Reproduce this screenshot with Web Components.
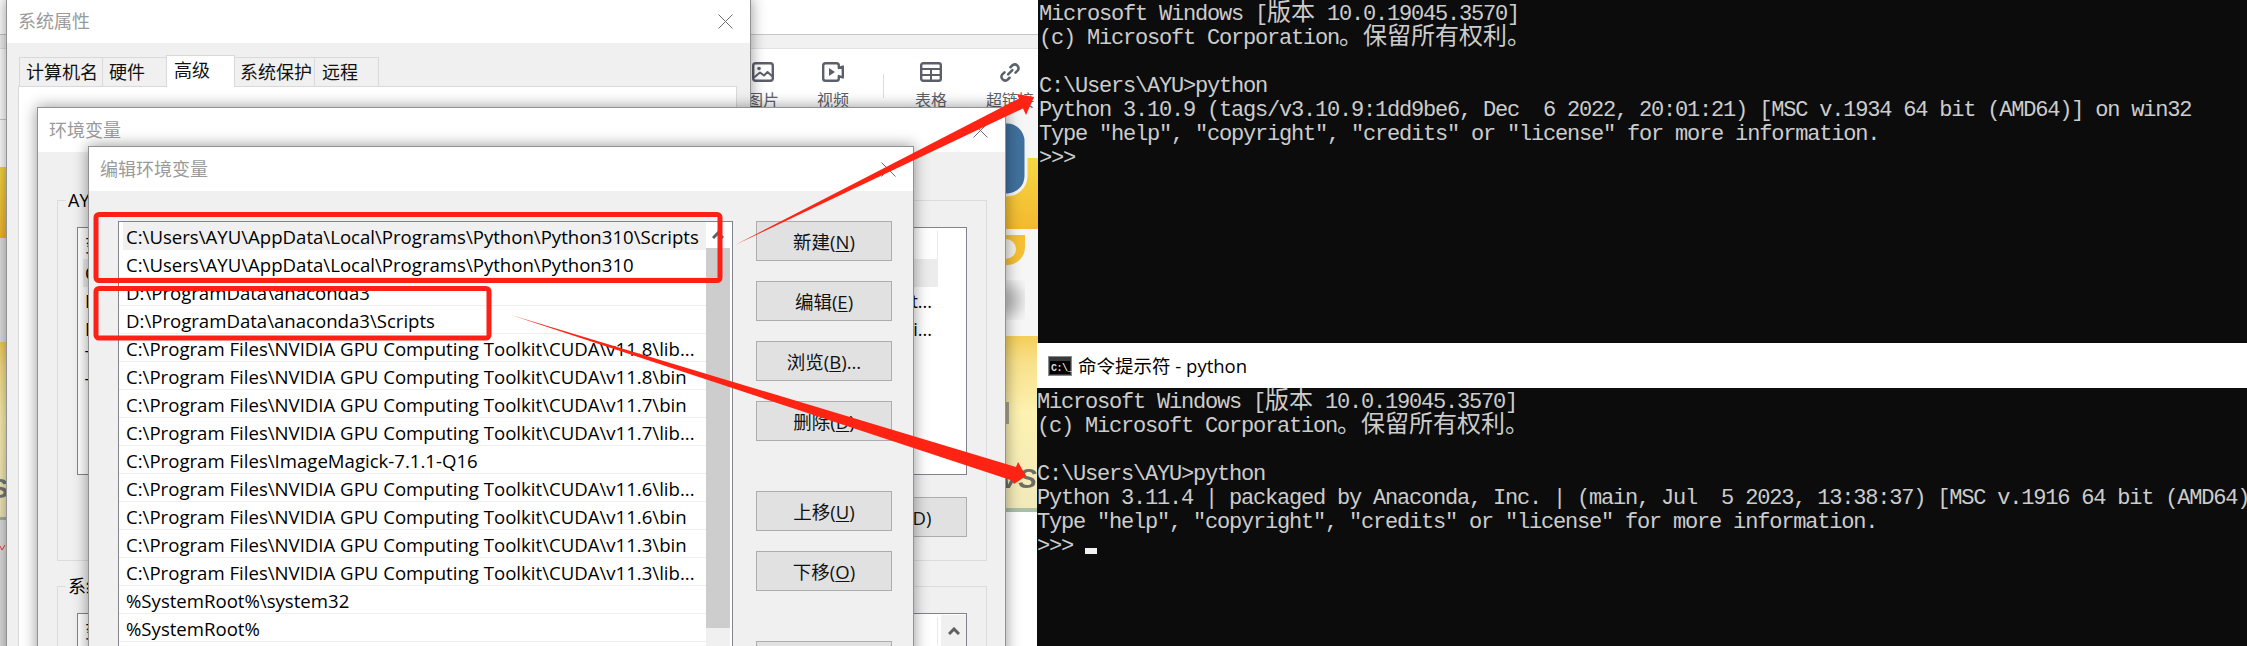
<!DOCTYPE html>
<html lang="zh-CN">
<head>
<meta charset="utf-8">
<title>Python PATH</title>
<style>
html,body{margin:0;padding:0;background:#fff;overflow:hidden}
body{font-family:"Open Sans","Noto Sans CJK SC",sans-serif}
x-desktop{width:2247px;height:646px}
#back{left:0;top:0;width:1038px;height:646px}
#sys{left:6px;top:-2px;width:745px;height:660px}
#env{left:37px;top:107px;width:969px;height:560px}
#edit{left:88px;top:146px;width:826px;height:520px}
#t1{left:1038px;top:0;width:1209px;height:343px}
#t2{left:1037px;top:343px;width:1210px;height:303px}
u{text-underline-offset:2px}
</style>
</head>
<body>
<x-desktop>
  <x-wallpaper></x-wallpaper>
  <x-backapp id="back">
    <x-tool label="图片"><svg viewBox="0 0 22 20" width="22" height="20" fill="none" stroke="#5b5f6b" stroke-width="2.4" stroke-linejoin="round"><rect x="1.2" y="1.2" width="19.6" height="17.6" rx="2.5"/><circle cx="7" cy="6.5" r="1.8" fill="#5b5f6b" stroke="none"/><path d="M2 15.5 8 10.5 12 13.5 15.5 10 20.5 14.5" stroke-width="2"/></svg></x-tool>
    <x-tool label="视频"><svg viewBox="0 0 22 20" width="22" height="20" fill="none" stroke="#5b5f6b" stroke-width="2.4" stroke-linejoin="round"><path d="M3.5 1.2H14.5A2.3 2.3 0 0 1 16.8 3.5V6L20.8 4.5V15.5L16.8 14V16.5A2.3 2.3 0 0 1 14.5 18.8H3.5A2.3 2.3 0 0 1 1.2 16.5V3.5A2.3 2.3 0 0 1 3.5 1.2Z"/><path d="M7 6V14L13 10Z" fill="#5b5f6b" stroke="none"/></svg></x-tool>
    <x-sep></x-sep>
    <x-tool label="表格" style="margin-left:12px"><svg viewBox="0 0 22 20" width="22" height="20" fill="none" stroke="#5b5f6b" stroke-width="2.4" stroke-linejoin="round"><rect x="1.2" y="1.2" width="19.6" height="17.6" rx="2"/><path d="M1.2 7H20.8M1.2 13H20.8M11 7V18.8" stroke-width="2"/></svg></x-tool>
    <x-tool label="超链接" style="width:88px"><svg viewBox="0 0 22 22" width="22" height="21" fill="none" stroke="#5b5f6b" stroke-width="2.6" stroke-linecap="round"><path d="M9 13 13.5 8.5"/><path d="M11.5 5.5 13.8 3.2A4 4 0 0 1 19.3 8.7L16.8 11.2"/><path d="M10.5 16.5 8.2 18.8A4 4 0 0 1 2.7 13.3L5.2 10.8"/></svg></x-tool>
  </x-backapp>

  <x-window id="sys" caption="系统属性">
    <x-tabstrip>
      <x-tab style="width:83.5px;padding-left:6px">计算机名</x-tab>
      <x-tab style="width:65px;padding-left:6.5px">硬件</x-tab>
      <x-tab active style="width:69px;padding-left:7.5px">高级</x-tab>
      <x-tab style="width:81.5px;padding-left:5.5px">系统保护</x-tab>
      <x-tab style="width:64.5px;padding-left:7px">远程</x-tab>
    </x-tabstrip>
    <x-tabpage></x-tabpage>
  </x-window>

  <x-window id="env" caption="环境变量">
    <x-envbody>
      <x-group legend="AYU 的用户变量(U)" style="height:361px">
        <x-varlist style="height:248px">
          <x-varrow head>变量</x-varrow>
          <x-varrow hot>OneDrive</x-varrow>
          <x-varrow tail="t...">Path</x-varrow>
          <x-varrow tail="pi...">PyCharm</x-varrow>
          <x-varrow>TEMP</x-varrow>
          <x-varrow>TMP</x-varrow>
        </x-varlist>
        <x-btnrow><x-winbtn style="width:200px;padding-left:102px;text-align:left">删除(D)</x-winbtn></x-btnrow>
      </x-group>
      <x-group legend="系统变量(S)" style="height:90px;margin-top:25px">
        <x-varlist arrow style="height:60px">
          <x-varrow head>变量</x-varrow>
        </x-varlist>
      </x-group>
    </x-envbody>
  </x-window>

  <x-window id="edit" caption="编辑环境变量">
    <x-editbody>
      <x-pathlist>
        <x-pathrow hot>C:\Users\AYU\AppData\Local\Programs\Python\Python310\Scripts</x-pathrow>
        <x-pathrow>C:\Users\AYU\AppData\Local\Programs\Python\Python310</x-pathrow>
        <x-pathrow>D:\ProgramData\anaconda3</x-pathrow>
        <x-pathrow>D:\ProgramData\anaconda3\Scripts</x-pathrow>
        <x-pathrow>C:\Program Files\NVIDIA GPU Computing Toolkit\CUDA\v11.8\lib...</x-pathrow>
        <x-pathrow>C:\Program Files\NVIDIA GPU Computing Toolkit\CUDA\v11.8\bin</x-pathrow>
        <x-pathrow>C:\Program Files\NVIDIA GPU Computing Toolkit\CUDA\v11.7\bin</x-pathrow>
        <x-pathrow>C:\Program Files\NVIDIA GPU Computing Toolkit\CUDA\v11.7\lib...</x-pathrow>
        <x-pathrow>C:\Program Files\ImageMagick-7.1.1-Q16</x-pathrow>
        <x-pathrow>C:\Program Files\NVIDIA GPU Computing Toolkit\CUDA\v11.6\lib...</x-pathrow>
        <x-pathrow>C:\Program Files\NVIDIA GPU Computing Toolkit\CUDA\v11.6\bin</x-pathrow>
        <x-pathrow>C:\Program Files\NVIDIA GPU Computing Toolkit\CUDA\v11.3\bin</x-pathrow>
        <x-pathrow>C:\Program Files\NVIDIA GPU Computing Toolkit\CUDA\v11.3\lib...</x-pathrow>
        <x-pathrow>%SystemRoot%\system32</x-pathrow>
        <x-pathrow>%SystemRoot%</x-pathrow>
      </x-pathlist>
      <x-btncol>
        <x-winbtn>新建(<u>N</u>)</x-winbtn>
        <x-winbtn>编辑(<u>E</u>)</x-winbtn>
        <x-winbtn>浏览(<u>B</u>)...</x-winbtn>
        <x-winbtn>删除(<u>D</u>)</x-winbtn>
        <x-winbtn style="margin-top:30px">上移(<u>U</u>)</x-winbtn>
        <x-winbtn>下移(<u>O</u>)</x-winbtn>
        <x-winbtn style="margin-top:30px"></x-winbtn>
      </x-btncol>
    </x-editbody>
  </x-window>

  <x-terminal id="t1">
    <x-line>Microsoft Windows [<x-wide>版本</x-wide> 10.0.19045.3570]</x-line>
    <x-line>(c) Microsoft Corporation<x-wide>。保留所有权利。</x-wide></x-line>
    <x-line></x-line>
    <x-line>C:\Users\AYU&gt;python</x-line>
    <x-line>Python 3.10.9 (tags/v3.10.9:1dd9be6, Dec  6 2022, 20:01:21) [MSC v.1934 64 bit (AMD64)] on win32</x-line>
    <x-line>Type "help", "copyright", "credits" or "license" for more information.</x-line>
    <x-line>&gt;&gt;&gt;</x-line>
  </x-terminal>

  <x-terminal id="t2" caption="命令提示符 - python">
    <x-line>Microsoft Windows [<x-wide>版本</x-wide> 10.0.19045.3570]</x-line>
    <x-line>(c) Microsoft Corporation<x-wide>。保留所有权利。</x-wide></x-line>
    <x-line></x-line>
    <x-line>C:\Users\AYU&gt;python</x-line>
    <x-line>Python 3.11.4 | packaged by Anaconda, Inc. | (main, Jul  5 2023, 13:38:37) [MSC v.1916 64 bit (AMD64)</x-line>
    <x-line>Type "help", "copyright", "credits" or "license" for more information.</x-line>
    <x-line>&gt;&gt;&gt; <x-cursor></x-cursor></x-line>
  </x-terminal>

  <x-annotations></x-annotations>
</x-desktop>

<script>
function def(name, html, init){
  customElements.define(name, class extends HTMLElement{
    constructor(){
      super();
      const r=this.attachShadow({mode:'open'});
      r.innerHTML=html;
    }
    connectedCallback(){ if(init) init(this,this.shadowRoot); }
  });
}
const UI='"Open Sans","Noto Sans CJK SC",sans-serif';
const CLOSE='<svg width="15" height="15" viewBox="0 0 15 15" fill="none" stroke="#6e6e6e" stroke-width="1"><path d="M.5.5 14.5 14.5M14.5.5.5 14.5"/></svg>';

def('x-desktop',`<style>:host{display:block;position:relative;overflow:hidden;background:#fff;color:#000}</style><slot></slot>`);

def('x-wallpaper',`<style>:host{position:absolute;left:0;top:0;width:1040px;height:646px;display:block}svg{display:block}</style>
<svg width="1040" height="646" viewBox="0 0 1040 646">
<defs>
<linearGradient id="cream" x1="0" y1="0" x2="0" y2="1"><stop offset="0" stop-color="#f4cf58"/><stop offset=".15" stop-color="#f8e08a"/><stop offset=".45" stop-color="#fdf2b0"/><stop offset="1" stop-color="#f1e9bb"/></linearGradient>
<linearGradient id="gold" x1="0" y1="0" x2="0" y2="1"><stop offset="0" stop-color="#f6d743"/><stop offset="1" stop-color="#f3b92e"/></linearGradient>
<filter id="b"><feGaussianBlur stdDeviation="7"/></filter><filter id="s"><feGaussianBlur stdDeviation=".6"/></filter>
</defs>
<rect width="1040" height="646" fill="#fff"/>
<g filter="url(#s)">
<text x="-7" y="22" font-family="Liberation Sans" font-size="26" fill="#333">p</text>
<rect x="0" y="48" width="6" height="1" fill="#ccc"/><rect x="0" y="119" width="6" height="1" fill="#ccc"/>
<rect x="0" y="167" width="6" height="71" fill="url(#gold)"/>
<rect x="0" y="238" width="6" height="104" fill="#e2e2e2"/>
<rect x="0" y="342" width="6" height="175" fill="url(#cream)"/>
<text x="-10" y="498" font-family="Liberation Sans" font-weight="700" font-size="28" fill="#777">S</text>
<rect x="0" y="517" width="6" height="3" fill="#9fb5a2"/>
<rect x="0" y="520" width="6" height="126" fill="#dfdfdf"/>
<path d="M0 546 2 550 5 545" fill="none" stroke="#f33" stroke-width="1"/>
<rect x="1006" y="107" width="34" height="236" fill="#f6f6f6"/>
<ellipse cx="1010" cy="300" rx="12" ry="16" fill="#bdbdbd" filter="url(#b)"/>
<rect x="1006" y="158" width="34" height="71" fill="url(#gold)"/>
<rect x="960" y="122" width="66" height="73" rx="19" fill="#3f719d" stroke="#f4f4f4" stroke-width="3"/>
<path d="M1006 235H1025V247A18 18 0 0 1 1007 265H1006Z" fill="#f6c033"/>
<circle cx="1006" cy="249" r="10" fill="#f5f3ea"/>
<rect x="1006" y="336" width="34" height="172" fill="url(#cream)"/>
<rect x="1006" y="402" width="3" height="22" fill="#a9a58c"/>
<text x="1037" y="488" text-anchor="end" font-family="Liberation Sans" font-weight="700" font-style="italic" font-size="28" fill="#6d6d68">VS</text>
<rect x="1006" y="508" width="34" height="4" fill="#a9bfa8"/>
</g>
</svg>`);

def('x-backapp',`<style>
:host{position:absolute;display:block;background:transparent;box-sizing:border-box;overflow:hidden}
.top{height:34px;background:#fff;border-bottom:1px solid #c6c6c6}
.gray{height:13px;background:#f1f1f1;border-bottom:1px solid #e2e2e2}
.bar{display:flex;align-items:flex-start;padding:13px 0 0 728px;height:46px;background:#fff}
</style><div class="top"></div><div class="gray"></div><div class="bar"><slot></slot></div>`);
def('x-tool',`<style>
:host{display:flex;flex-direction:column;align-items:center;width:70px;flex:none;color:#5e6068;font:16px/20px ${UI}}
.i{height:20px;margin-bottom:8px}
svg,::slotted(svg){display:block}
</style><div class="i"><slot></slot></div><span id="l"></span>`,(h,r)=>{r.getElementById('l').textContent=h.getAttribute('label')});
def('x-sep',`<style>:host{display:block;width:1px;height:24px;background:#dcdcdc;margin:12px 0 0 15px;flex:none}</style>`);

def('x-window',`<style>
:host{position:absolute;display:flex;flex-direction:column;box-sizing:border-box;background:#f0f0f0;border:1px solid #929292;box-shadow:0 0 14px rgba(0,0,0,.42);font:18px/24px ${UI};color:#000}
.t{flex:none;height:44px;background:#fff;display:flex;align-items:center;padding:0 17px 0 11px;color:#9a9a9a}
.t svg{margin-left:auto}
.b{flex:1;min-height:0;display:flex;flex-direction:column;overflow:hidden}
</style><div class="t"><span id="c"></span>${CLOSE}</div><div class="b"><slot></slot></div>`,(h,r)=>{r.getElementById('c').textContent=h.getAttribute('caption')});

def('x-tabstrip',`<style>:host{display:flex;align-items:flex-end;height:31px;padding:12px 0 0 12px;flex:none}</style><slot></slot>`);
def('x-tab',`<style>
:host{display:block;box-sizing:border-box;height:29px;line-height:29px;border:1px solid #d9d9d9;border-bottom:0;background:#f0f0f0;color:#111;margin-right:-1px;flex:none;white-space:nowrap}
:host([active]){line-height:28px;background:#fff;position:relative;z-index:1;margin-bottom:-1px;height:32px}
</style><slot></slot>`);
def('x-tabpage',`<style>:host{display:block;flex:1;margin:0 13px 0 11px;background:#fff;border:1px solid #d9d9d9}</style>`);

def('x-envbody',`<style>:host{display:block;padding:48px 18px 0 19px}</style><slot></slot>`);
def('x-group',`<style>
:host{display:block;position:relative;box-sizing:border-box;border:1px solid #dcdcdc;padding:26px 19px 0}
.l{position:absolute;left:8px;top:-13px;background:#f0f0f0;padding:0 2px;white-space:nowrap}
</style><span class="l" id="l"></span><slot></slot>`,(h,r)=>{r.getElementById('l').textContent=h.getAttribute('legend')});
def('x-varlist',`<style>
:host{display:block;position:relative;box-sizing:border-box;background:#fff;border:1px solid #83838c;padding:3px 28px 0 5px;overflow:hidden}
.a{display:none;position:absolute;right:0;top:1px;width:25px;height:100%;background:#f0f0f0;align-items:flex-start;justify-content:center;padding-top:12px}
:host([arrow]) .a{display:flex}
</style><slot></slot><div class="a"><svg width="12" height="8" viewBox="0 0 12 8" fill="none" stroke="#606060" stroke-width="3"><path d="M1 7 6 2 11 7"/></svg></div>`);
def('x-varrow',`<style>
:host{display:flex;box-sizing:border-box;height:28px;line-height:28px;padding-left:2px;white-space:nowrap;justify-content:space-between;padding-right:6px}
:host([hot]){background:#ececec}
:host([head]){border-right:1px solid #e8e8e8}
</style><slot></slot><span id="t"></span>`,(h,r)=>{r.getElementById('t').textContent=h.getAttribute('tail')||''});
def('x-btnrow',`<style>:host{display:flex;justify-content:flex-end;margin-top:22px}</style><slot></slot>`);

def('x-editbody',`<style>:host{display:flex;align-items:flex-start;gap:23px;padding:30px 0 0 29px}</style><slot></slot>`);
def('x-pathlist',`<style>
:host{display:flex;box-sizing:border-box;width:615px;height:470px;background:#fff;border:1px solid #83838c;flex:none}
.rows{width:587px;flex:none;overflow:hidden}
.bar{width:24px;flex:none;display:flex;flex-direction:column;background:#f0f0f0}
.up{height:26px;background:#fff;display:flex;align-items:center;justify-content:center}
.th{height:380px;background:#cdcdcd}
</style><div class="rows"><slot></slot></div><div class="bar"><div class="up"><svg width="12" height="8" viewBox="0 0 12 8" fill="none" stroke="#606060" stroke-width="3"><path d="M1 7 6 2 11 7"/></svg></div><div class="th"></div></div>`);
def('x-pathrow',`<style>
:host{display:block;box-sizing:border-box;height:28px;line-height:29px;padding-left:7px;border-bottom:1px solid #efefef;white-space:nowrap;font-size:18.6px;color:#000}
:host([hot]){background:#f0f0f0;margin-left:4px;padding-left:3px;border-bottom:0}
</style><slot></slot>`);
def('x-btncol',`<style>:host{display:flex;flex-direction:column;gap:20px;flex:none}</style><slot></slot>`);
def('x-winbtn',`<style>
:host{display:block;box-sizing:border-box;width:136px;height:40px;flex:none;background:#e1e1e1;border:1px solid #adadad;text-align:center;line-height:40px;color:#111;white-space:nowrap;overflow:hidden;font-size:18.5px}
</style><slot></slot>`);

def('x-terminal',`<style>
:host{position:absolute;display:flex;flex-direction:column;background:#0c0c0c;overflow:hidden;color:#ccc;font:22px/24px "Liberation Mono","Noto Sans CJK SC",monospace;letter-spacing:-1.2px}
.t{display:none;flex:none;height:45px;background:#fff;align-items:center;padding-left:11px;gap:6px;color:#000;font:18.5px/24px ${UI};letter-spacing:0}
:host([caption]) .t{display:flex}
.b{padding:3px 0 0 1px}
:host([caption]) .b{padding-left:0}
svg{display:block}
</style><div class="t"><svg width="24" height="20" viewBox="0 0 24 20"><rect width="24" height="20" fill="#8a8a8a"/><rect x="1" y="1" width="22" height="18" fill="#3a3a3a"/><rect x="2" y="5" width="20" height="13" fill="#000"/><text x="3" y="15" font-family="Liberation Mono" font-size="10" font-weight="700" fill="#ddd" letter-spacing="-.5">C:\\_</text></svg><span id="c"></span></div><div class="b"><slot></slot></div>`,(h,r)=>{r.getElementById('c').textContent=h.getAttribute('caption')||''});
def('x-line',`<style>:host{display:block;height:24px;white-space:pre}</style><slot></slot>`);
def('x-wide',`<style>:host{font:24px/0 "Noto Sans CJK SC",sans-serif;letter-spacing:0}</style><slot></slot>`);
def('x-cursor',`<style>:host{display:inline-block;width:12px;height:6px;background:#f2f2f2;vertical-align:-2px}</style>`);

def('x-annotations',`<style>
:host{position:absolute;left:0;top:0;width:2247px;height:646px;display:block;pointer-events:none}
svg{display:block}
</style><svg width="2247" height="646" viewBox="0 0 2247 646">
<g fill="none" stroke="#fe1f17" stroke-width="5" stroke-linejoin="round">
<rect x="96" y="214.5" width="624" height="66" rx="3"/>
<rect x="96" y="288.5" width="393" height="49.5" rx="3"/>
</g>
<g fill="#fe2313">
<polygon points="735,245 1019,98.5 1017,94 1034,97 1026,115 1023,108.5"/>
<polygon points="511,315 1016,467 1018,462 1026,476 1014,484 1012,480.5"/>
</g></svg>`);
</script>
</body>
</html>
